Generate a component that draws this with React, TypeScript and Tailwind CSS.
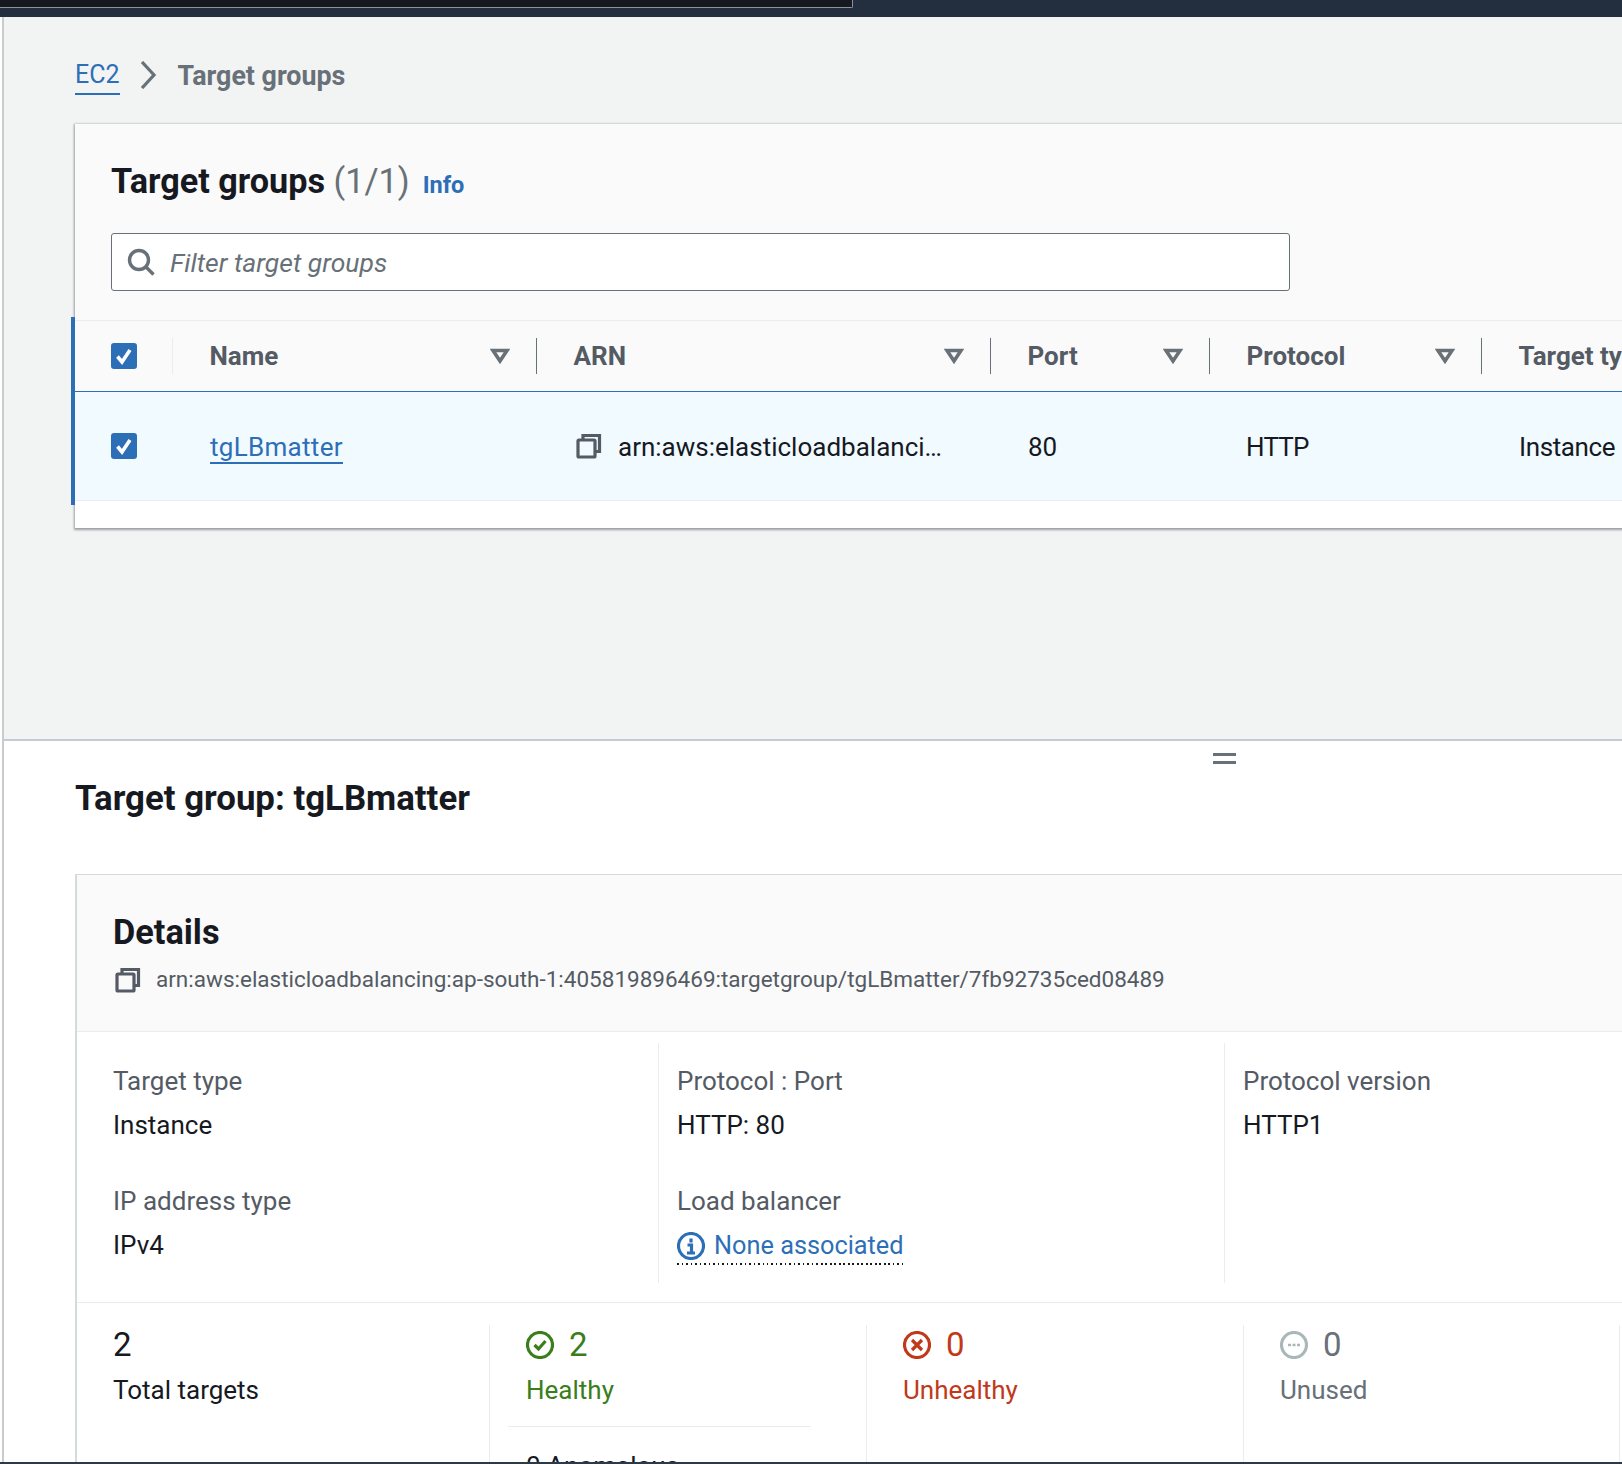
const font = "font-['Roboto','Liberation_Sans',sans-serif]";

function CopyIcon({ className = "" }: { className?: string }) {
  return (
    <svg viewBox="0 0 26 26" className={className} fill="none" stroke="#545b64" strokeWidth="3.2">
      <path d="M7 7V2.5h16.5V18.5H19" />
      <rect x="2" y="7" width="17" height="17" rx="1" />
    </svg>
  );
}

function Checkbox() {
  return (
    <div className="flex h-[26px] w-[26px] items-center justify-center rounded-[3px] bg-[#2d6fb7]">
      <svg viewBox="0 0 26 26" className="h-[26px] w-[26px]" fill="none" stroke="#fff" strokeWidth="3.6">
        <path d="M6.5 13.5 11 19 19 7" />
      </svg>
    </div>
  );
}

function FilterCaret() {
  return (
    <svg viewBox="0 0 20 16" className="h-[16px] w-[20px]" fill="none" stroke="#687078" strokeWidth="3.6">
      <path d="M3 2.5h14L10 13z" />
    </svg>
  );
}

function HeaderCell({ label, width, caret = true }: { label: string; width: number; caret?: boolean }) {
  return (
    <div className="flex h-[36px] shrink-0 items-center justify-between" style={{ width }}>
      <span className="pl-[36.5px] text-[26px] font-bold whitespace-nowrap text-[#545b64]">{label}</span>
      {caret && (
        <div className="flex h-full items-center gap-[17px] border-r border-[#687078]">
          <FilterCaret />
          <span className="w-[9px]" />
        </div>
      )}
    </div>
  );
}

function KeyValue({ label, value }: { label: string; value: string }) {
  return (
    <div className="h-[120px]">
      <div className="text-[26px] leading-[36px] text-[#545b64]">{label}</div>
      <div className="mt-[8px] text-[26px] leading-[36px] text-[#16191f]">{value}</div>
    </div>
  );
}

export default function App() {
  return (
    <div className={`flex h-[1464px] w-[1622px] flex-col overflow-hidden bg-white ${font}`}>
      <div className="h-[17px] shrink-0 bg-[#232f3e]">
        <div className="h-[8px] w-[853px] rounded-br-[2px] border-r border-b border-[#8d9499] bg-[#16191f]" />
      </div>

      <div className="ml-[2px] flex min-h-0 flex-1 flex-col border-l-2 border-[#c8cccc]">
        {/* upper split: table */}
        <div className="h-[724px] shrink-0 border-b-2 border-[#c5cbd0] bg-[#f2f3f3] pl-[71px]">
          <div className="flex h-[107px] items-start pt-[40px] leading-[36px] font-bold">
            <span className="border-b-2 border-[#2d6fb7] text-[25px] font-normal text-[#2d6fb7]">EC2</span>
            <svg viewBox="0 0 18 28" className="mt-[4px] ml-[19px] h-[28px] w-[18px]" fill="none" stroke="#687078" strokeWidth="3.2">
              <path d="M3 1l12 13L3 27" />
            </svg>
            <span className="mt-[1px] ml-[21px] text-[26.8px] text-[#687078]">Target groups</span>
          </div>

          <div className="relative h-[404px] w-[1560px] bg-white shadow-[0_1px_2px_1px_rgba(84,91,100,0.55)]">
            <div className="absolute top-[193px] -left-[4px] h-[188px] w-[4px] bg-[#2d6fb7]" />

            <div className="h-[196px] bg-[#fafafa] px-[36px] pt-[36px]">
              <div className="flex items-baseline gap-[13px]">
                <h1 className="text-[34.2px] leading-[42px] font-bold text-[#16191f]">
                  Target groups <span className="font-normal text-[#687078]">(1/1)</span>
                </h1>
                <span className="text-[23.5px] font-bold text-[#2d6fb7]">Info</span>
              </div>
              <div className="mt-[30px] flex h-[58px] w-[1179px] items-center gap-[15px] rounded-[3px] border-[1.5px] border-[#687078] bg-white pl-[15px]">
                <svg viewBox="0 0 28 28" className="h-[28px] w-[28px]" fill="none" stroke="#687078" strokeWidth="3.4">
                  <circle cx="12" cy="12" r="9.5" />
                  <path d="M19 19l7.5 7.5" />
                </svg>
                <span className="pt-[2px] text-[26.5px] text-[#687078] italic">Filter target groups</span>
              </div>
            </div>

            <div className="flex h-[71px] items-center border-t border-[#eaeded] bg-[#fafafa] pl-[36px]">
              <Checkbox />
              <div className="ml-[35px] h-[36px] border-r border-[#eaeded]" />
              <HeaderCell label="Name" width={364} />
              <HeaderCell label="ARN" width={454} />
              <HeaderCell label="Port" width={219} />
              <HeaderCell label="Protocol" width={272} />
              <HeaderCell label="Target type" width={200} caret={false} />
            </div>

            <div className="flex h-[110px] items-center border-t border-b border-t-[#2d6fb7] border-b-[#eaeded] bg-[#f1faff] pl-[36px] text-[26px] text-[#16191f]">
              <Checkbox />
              <span className="ml-[73px] w-[366px] shrink-0 pt-[2px]">
                <span className="border-b-2 border-[#2d6fb7] tracking-[0.3px] text-[#2d6fb7]">tgLBmatter</span>
              </span>
              <div className="flex w-[452px] shrink-0 items-center gap-[16px]">
                <CopyIcon className="h-[26px] w-[26px]" />
                <span className="pt-[2px] whitespace-nowrap">arn:aws:elasticloadbalanci…</span>
              </div>
              <span className="w-[218px] shrink-0 pt-[2px]">80</span>
              <span className="w-[273px] shrink-0 pt-[2px] tracking-[-0.8px]">HTTP</span>
              <span className="shrink-0 pt-[2px] tracking-[-0.4px] whitespace-nowrap">Instance</span>
            </div>
          </div>
        </div>

        {/* lower split: details */}
        <div className="relative min-h-0 flex-1 overflow-hidden pl-[71px]">
          <div className="absolute top-[12px] left-[1209px] h-[11px] w-[23px] border-y-[3px] border-[#687078]" />
          <h2 className="pt-[36px] text-[34.8px] leading-[42px] font-bold text-[#16191f]">Target group: tgLBmatter</h2>

          <div className="mt-[55px] w-[1560px] border-t border-l-2 border-[#d5dbdb]">
            <div className="h-[157px] border-b border-[#eaeded] bg-[#fafafa] pt-[37px] pl-[36px]">
              <h3 className="text-[34.3px] leading-[40px] font-bold text-[#16191f]">Details</h3>
              <div className="mt-[9px] flex items-center gap-[15px] pl-[2px]">
                <CopyIcon className="mt-[2px] h-[26px] w-[26px]" />
                <span className="text-[22.5px] leading-[36px] whitespace-nowrap text-[#545b64]">
                  arn:aws:elasticloadbalancing:ap-south-1:405819896469:targetgroup/tgLBmatter/7fb92735ced08489
                </span>
              </div>
            </div>

            <div className="flex h-[271px] border-b border-[#eaeded] pt-[11px]">
              <div className="h-[240px] w-[582px] shrink-0 border-r border-[#eaeded] pt-[20px] pl-[36px]">
                <KeyValue label="Target type" value="Instance" />
                <KeyValue label="IP address type" value="IPv4" />
              </div>
              <div className="h-[240px] w-[566px] shrink-0 border-r border-[#eaeded] pt-[20px] pl-[18px]">
                <KeyValue label="Protocol : Port" value="HTTP: 80" />
                <div className="text-[26px] leading-[36px] text-[#545b64]">Load balancer</div>
                <div className="mt-[10px] inline-flex flex-col">
                  <div className="flex items-center gap-[9px] text-[25.3px] leading-[34px] text-[#2d6fb7]">
                    <svg viewBox="0 0 28 28" className="h-[28px] w-[28px]" fill="none" stroke="#2d6fb7">
                      <circle cx="14" cy="14" r="12.5" strokeWidth="3.2" />
                      <path d="M14 6.5v4M10.5 13h4v8M10 21h8" strokeWidth="3.2" />
                    </svg>
                    None associated
                  </div>
                  <div className="h-[1.5px] bg-[repeating-linear-gradient(90deg,#16191f_0,#16191f_1.5px,transparent_1.5px,transparent_4.5px)]" />
                </div>
              </div>
              <div className="pt-[20px] pl-[18px]">
                <KeyValue label="Protocol version" value="HTTP1" />
              </div>
            </div>

            <div className="flex pt-[22px] text-[26px]">
              <div className="h-[140px] w-[413px] shrink-0 border-r border-[#eaeded] pl-[36px] text-[#16191f]">
                <div className="text-[33px] leading-[40px]">2</div>
                <div className="mt-[7px] leading-[36px]">Total targets</div>
              </div>
              <div className="h-[140px] w-[377px] shrink-0 border-r border-[#eaeded] pl-[18px]">
                <div className="pl-[18px] text-[#3b7d1b]">
                  <div className="flex items-center gap-[15px] text-[33px] leading-[40px]">
                    <svg viewBox="0 0 28 28" className="h-[28px] w-[28px]" fill="none" stroke="#3b7d1b" strokeWidth="3.2">
                      <circle cx="14" cy="14" r="12.5" />
                      <path d="M8.5 14l4 4 7-8" />
                    </svg>
                    2
                  </div>
                  <div className="mt-[7px] leading-[36px]">Healthy</div>
                </div>
                <div className="mt-[18px] w-[303px] border-t border-[#eaeded]" />
                <div className="mt-[21px] pl-[18px] leading-[36px] text-[#16191f]">0 Anomalous</div>
              </div>
              <div className="h-[140px] w-[377px] shrink-0 border-r border-[#eaeded] pl-[36px] text-[#c0391b]">
                <div className="flex items-center gap-[15px] text-[33px] leading-[40px]">
                  <svg viewBox="0 0 28 28" className="h-[28px] w-[28px]" fill="none" stroke="#c0391b" strokeWidth="3.2">
                    <circle cx="14" cy="14" r="12.5" />
                    <path d="M9 9l10 10M19 9 9 19" />
                  </svg>
                  0
                </div>
                <div className="mt-[7px] leading-[36px]">Unhealthy</div>
              </div>
              <div className="h-[140px] w-[376px] shrink-0 border-r border-[#eaeded] pl-[36px] text-[#687078]">
                <div className="flex items-center gap-[15px] text-[33px] leading-[40px]">
                  <svg viewBox="0 0 28 28" className="h-[28px] w-[28px]" fill="none" stroke="#aab7b8" strokeWidth="3.2">
                    <circle cx="14" cy="14" r="12.5" />
                    <path d="M8 14h3M12.5 14h3M17 14h3" strokeWidth="2.6" />
                  </svg>
                  0
                </div>
                <div className="mt-[7px] leading-[36px]">Unused</div>
              </div>
            </div>
          </div>
        </div>
      </div>
      <div className="h-[2px] shrink-0 bg-[#2c3a47]" />
    </div>
  );
}
